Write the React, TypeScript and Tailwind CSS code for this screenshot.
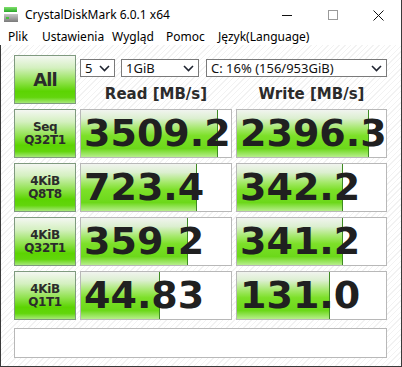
import React from "react";

type Row = { line1: string; line2: string; read: number; write: number };

const ROWS: Row[] = [
  { line1: "Seq", line2: "Q32T1", read: 3509.2, write: 2396.3 },
  { line1: "4KiB", line2: "Q8T8", read: 723.4, write: 342.2 },
  { line1: "4KiB", line2: "Q32T1", read: 359.2, write: 341.2 },
  { line1: "4KiB", line2: "Q1T1", read: 44.83, write: 131.0 },
];

const MENU = [
  { label: "Plik", w: "w-[34px]" },
  { label: "Ustawienia", w: "w-[70px]" },
  { label: "Wygląd", w: "w-[54px]" },
  { label: "Pomoc", w: "w-[52px]" },
  { label: "Język(Language)", w: "w-[100px]" },
];

// meter bar length is on a log scale
function barWidth(v: number) {
  return Math.round(30.6 * Math.log10(v) + 28.5);
}

function fmt(v: number) {
  if (v >= 100) return v.toFixed(1);
  return v.toFixed(2);
}

function Chevron() {
  return (
    <svg width="11" height="7" viewBox="0 0 11 7" className="shrink-0">
      <polyline points="1,1 5.5,5.5 10,1" fill="none" stroke="#1f2430" strokeWidth="1.6" />
    </svg>
  );
}

function Select({ value, className }: { value: string; className: string }) {
  return (
    <div
      className={`h-[18px] flex items-center justify-between pl-[4px] pr-[4px] bg-white border border-[#7a7a7a] ${className}`}
    >
      <span className="text-[13px] leading-[16px] text-[#111]">{value}</span>
      <Chevron />
    </div>
  );
}

function LabelButton({ children }: { children: React.ReactNode }) {
  return (
    <div className="h-[49px] w-[62px] flex flex-col items-center justify-center border border-[#7f9a7f] bg-[image:linear-gradient(to_bottom,#f4f7f2_0%,#d4f0c0_25%,#8fe24c_55%,#5cd402_75%,#62d60c_88%,#a6e878_100%)] font-['DejaVu_Sans',sans-serif] font-bold text-[#2b2b2b]">
      {children}
    </div>
  );
}

function Meter({ value }: { value: number }) {
  return (
    <div className="relative h-[49px] bg-white border border-[#b8b8b8] overflow-hidden">
      <div
        className="absolute left-0 top-0 bottom-0 border-r border-[#3e8a22] bg-[image:linear-gradient(to_bottom,#f1f4ef_0%,#dcefd0_18%,#a2e866_40%,#7ce028_55%,#6cd81a_82%,#b7ee8c_100%)]"
        style={{ width: barWidth(value) }}
      />
      <div className="relative pl-[3px] text-[38px] leading-[47px] font-bold text-[#202020] font-['DejaVu_Sans',sans-serif] whitespace-nowrap">
        {fmt(value)}
      </div>
    </div>
  );
}

function DiskIcon() {
  return (
    <svg width="14" height="16" viewBox="0 0 14 16">
      <defs>
        <linearGradient id="g1" x1="0" y1="0" x2="0" y2="1">
          <stop offset="0" stopColor="#7fe06a" />
          <stop offset="1" stopColor="#2aa82a" />
        </linearGradient>
        <linearGradient id="g2" x1="0" y1="0" x2="0" y2="1">
          <stop offset="0" stopColor="#c8c8c8" />
          <stop offset="1" stopColor="#7a7a7a" />
        </linearGradient>
      </defs>
      <rect x="0" y="0" width="13" height="5" fill="url(#g1)" />
      <rect x="0" y="7" width="14" height="8" fill="url(#g2)" />
      <rect x="2" y="10" width="3" height="2" fill="#46c23a" />
    </svg>
  );
}

export default function App() {
  return (
    <div className="w-[402px] h-[367px] flex flex-col bg-white overflow-hidden border-r border-[#3a3a3a] font-['Noto_Sans',sans-serif]">
      {/* title bar */}
      <div className="h-[30px] shrink-0 flex items-center">
        <div className="pl-[4px] pr-[7px] flex items-center">
          <DiskIcon />
        </div>
        <span className="text-[12px] text-black">CrystalDiskMark 6.0.1 x64</span>
        <div className="ml-auto flex items-center h-full">
          <div className="w-[46px] h-full flex items-center justify-center">
            <div className="w-[10px] h-px bg-[#111]" />
          </div>
          <div className="w-[46px] h-full flex items-center justify-center">
            <div className="w-[10px] h-[10px] border border-[#9a9a9a]" />
          </div>
          <div className="w-[45px] h-full flex items-center justify-center">
            <svg width="11" height="11" viewBox="0 0 11 11">
              <path d="M0.5 0.5 L10.5 10.5 M10.5 0.5 L0.5 10.5" stroke="#111" strokeWidth="1" />
            </svg>
          </div>
        </div>
      </div>

      {/* menu */}
      <div className="h-[14px] shrink-0 flex items-center pl-[8px] text-[12px] leading-[14px] text-black">
        {MENU.map((m) => (
          <span key={m.label} className={`${m.w} whitespace-nowrap`}>
            {m.label}
          </span>
        ))}
      </div>

      {/* main panel */}
      <div className="flex-1 mt-px border-l border-b border-[#3a3a3a] pl-[13px] pt-[10px] bg-[image:repeating-linear-gradient(135deg,#ffffff_0px,#ffffff_3px,#f2f2f2_3px,#f2f2f2_4px)]">
        <div className="grid grid-cols-[62px_152px_151px] gap-x-[4px] gap-y-[5px]">
          <div className="h-[49px] w-[62px] flex items-center justify-center border border-[#7f9a7f] bg-[image:linear-gradient(to_bottom,#f4f7f2_0%,#d4f0c0_25%,#8fe24c_55%,#5cd402_75%,#62d60c_88%,#a6e878_100%)] font-['DejaVu_Sans',sans-serif] font-bold text-[18px] text-[#2b2b2b] tracking-[-1px]">
            All
          </div>
          <div className="col-span-2 flex flex-col pt-[4px]">
            <div className="flex gap-x-[6px]">
              <Select value="5" className="w-[35px]" />
              <Select value="1GiB" className="w-[78px]" />
              <Select value="C: 16% (156/953GiB)" className="w-[181px] ml-px" />
            </div>
            <div className="grid grid-cols-[152px_151px] gap-x-[4px] mt-[8px] font-['DejaVu_Sans',sans-serif] font-bold text-[15px] leading-[18px] text-[#2b2b2b]">
              <div className="text-center">Read [MB/s]</div>
              <div className="text-center">Write [MB/s]</div>
            </div>
          </div>

          {ROWS.map((r) => (
            <React.Fragment key={r.line1 + r.line2}>
              <LabelButton>
                <span className="text-[12px] leading-[13px] tracking-[-0.4px]">{r.line1}</span>
                <span className="text-[12px] leading-[13px] tracking-[-0.4px]">{r.line2}</span>
              </LabelButton>
              <Meter value={r.read} />
              <Meter value={r.write} />
            </React.Fragment>
          ))}
        </div>

        <div className="mt-[8px] w-[373px] h-[30px] bg-white border border-[#b8b8b8]" />
      </div>
    </div>
  );
}
